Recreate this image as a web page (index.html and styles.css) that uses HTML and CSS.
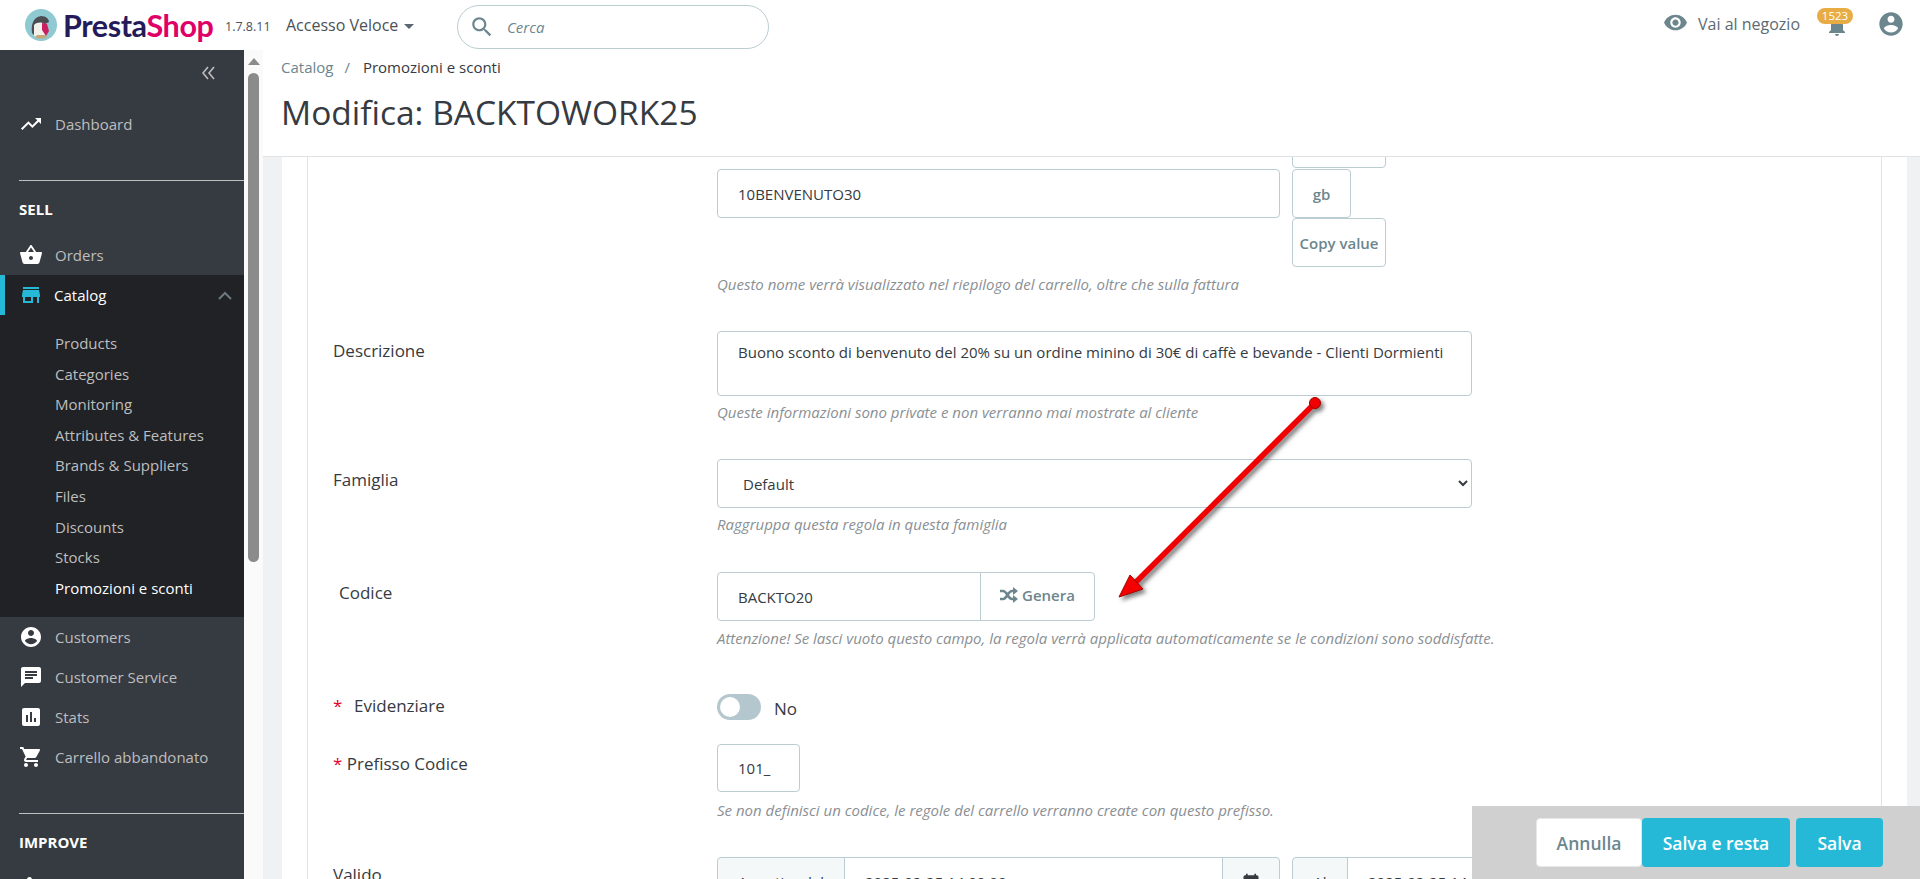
FILE: index.html
```html
<!DOCTYPE html>
<html lang="it">
<head>
    <meta charset="UTF-8">
    <meta name="viewport" content="width=device-width, initial-scale=1.0">
    <title>Modifica: BACKTOWORK25</title>
    <link rel="stylesheet" href="styles.css">
</head>
<body>
    <div class="app">
        <!-- Top bar -->
        <header class="topbar">
            <div class="logo">
                <svg class="logo-mark" viewBox="0 0 32 32" width="32" height="32">
                    <circle cx="16" cy="16" r="16" fill="#8fc9d2"/>
                    <path d="M7 24c-1-8 1-16 9-17 5 0 8 3 8 6l-4 2 1 9c-2 4-11 5-14 0z" fill="#4b4d52"/>
                    <path d="M9 16c3-3 8-3 10-1l1 11c-3 3-8 3-11 1z" fill="#f3f1ec"/>
                    <path d="M17 14l5 1 2 7-3 5-4-6z" fill="#c9215f"/>
                    <path d="M10 28c3 2 9 2 12 0l-2-2h-8z" fill="#c8a878"/>
                </svg>
                <span class="logo-name"><span class="logo-dark">Presta</span><span class="logo-pink">Shop</span></span>
            </div>
            <span class="version">1.7.8.11</span>
            <a class="quick-access">Accesso Veloce <i class="caret"></i></a>
            <div class="search">
                <svg class="search-icon" viewBox="0 0 24 24" width="26" height="26"><path d="M15.5 14h-.79l-.28-.27C15.41 12.59 16 11.11 16 9.5 16 5.91 13.09 3 9.5 3S3 5.91 3 9.5 5.91 16 9.5 16c1.61 0 3.09-.59 4.23-1.57l.27.28v.79l5 4.99L20.49 19l-4.99-5zm-6 0C7.01 14 5 11.99 5 9.5S7.01 5 9.5 5 14 7.01 14 9.5 11.99 14 9.5 14z"/></svg>
                <span class="search-text">Cerca</span>
            </div>
            <div class="topbar-right">
                <a class="shop-link">
                    <svg viewBox="0 0 24 24" width="25" height="25"><path d="M12 4.5C7 4.5 2.73 7.61 1 12c1.73 4.39 6 7.5 11 7.5s9.27-3.11 11-7.5c-1.73-4.39-6-7.5-11-7.5zM12 17c-2.76 0-5-2.24-5-5s2.24-5 5-5 5 2.24 5 5-2.24 5-5 5zm0-8c-1.66 0-3 1.34-3 3s1.34 3 3 3 3-1.34 3-3-1.34-3-3-3z"/></svg>
                    Vai al negozio
                </a>
                <div class="bell">
                    <svg viewBox="0 0 24 24" width="24" height="24"><path d="M12 22c1.1 0 2-.9 2-2h-4c0 1.1.89 2 2 2zm6-6v-5c0-3.07-1.64-5.64-4.5-6.32V4c0-.83-.67-1.5-1.5-1.5s-1.5.67-1.5 1.5v.68C7.63 5.36 6 7.92 6 11v5l-2 2v1h16v-1l-2-2z"/></svg>
                    <span class="badge">1523</span>
                </div>
                <svg class="user-icon" viewBox="0 0 24 24" width="28" height="28"><path d="M12 2C6.48 2 2 6.48 2 12s4.48 10 10 10 10-4.48 10-10S17.52 2 12 2zm0 3c1.66 0 3 1.34 3 3s-1.34 3-3 3-3-1.34-3-3 1.34-3 3-3zm0 14.2c-2.5 0-4.71-1.28-6-3.22.03-1.99 4-3.08 6-3.08 1.99 0 5.97 1.09 6 3.08-1.29 1.94-3.5 3.22-6 3.22z"/></svg>
            </div>
        </header>

        <div class="body">
            <!-- Sidebar -->
            <nav class="sidebar">
                <div class="collapse-row">
                    <svg viewBox="0 0 16 14" width="16" height="14"><path d="M7 1L2 7l5 6M13 1L8 7l5 6" fill="none" stroke="#bebebe" stroke-width="1.6"/></svg>
                </div>
                <a class="nav-item">
                    <svg viewBox="0 0 24 24" width="24" height="24"><path d="M16 6l2.29 2.29-4.88 4.88-4-4L2 16.59 3.41 18l6-6 4 4 6.3-6.29L22 12V6z"/></svg>
                    Dashboard
                </a>
                <div class="nav-section">SELL</div>
                <a class="nav-item">
                    <svg viewBox="0 0 24 24" width="24" height="24"><path d="M17.21 9l-4.38-6.56c-.19-.28-.51-.42-.83-.42-.32 0-.64.14-.83.43L6.79 9H2c-.55 0-1 .45-1 1 0 .09.01.18.04.27l2.54 9.27c.23.84 1 1.46 1.92 1.46h13c.92 0 1.69-.62 1.93-1.46l2.54-9.27L23 10c0-.55-.45-1-1-1h-4.79zM9 9l3-4.4L15 9H9zm3 8c-1.1 0-2-.9-2-2s.9-2 2-2 2 .9 2 2-.9 2-2 2z"/></svg>
                    Orders
                </a>
                <div class="nav-group">
                    <a class="nav-item active">
                        <svg viewBox="0 0 24 24" width="24" height="24"><path d="M20 4H4v2h16V4zm1 10v-2l-1-5H4l-1 5v2h1v6h10v-6h4v6h2v-6h1zm-9 4H6v-4h6v4z"/></svg>
                        Catalog
                        <svg class="chevron" viewBox="0 0 14 9" width="14" height="9"><path d="M1 8l6-6 6 6" fill="none" stroke="#6c7a80" stroke-width="2"/></svg>
                    </a>
                    <ul class="subnav">
                        <li>Products</li>
                        <li>Categories</li>
                        <li>Monitoring</li>
                        <li>Attributes &amp; Features</li>
                        <li>Brands &amp; Suppliers</li>
                        <li>Files</li>
                        <li>Discounts</li>
                        <li>Stocks</li>
                        <li class="current">Promozioni e sconti</li>
                    </ul>
                </div>
                <a class="nav-item">
                    <svg viewBox="0 0 24 24" width="24" height="24"><path d="M12 2C6.48 2 2 6.48 2 12s4.48 10 10 10 10-4.48 10-10S17.52 2 12 2zm0 3c1.66 0 3 1.34 3 3s-1.34 3-3 3-3-1.34-3-3 1.34-3 3-3zm0 14.2c-2.5 0-4.71-1.28-6-3.22.03-1.99 4-3.08 6-3.08 1.99 0 5.97 1.09 6 3.08-1.29 1.94-3.5 3.22-6 3.22z"/></svg>
                    Customers
                </a>
                <a class="nav-item">
                    <svg viewBox="0 0 24 24" width="24" height="24"><path d="M20 2H4c-1.1 0-1.99.9-1.99 2L2 22l4-4h14c1.1 0 2-.9 2-2V4c0-1.1-.9-2-2-2zM6 9h12v2H6V9zm8 5H6v-2h8v2zm4-6H6V6h12v2z"/></svg>
                    Customer Service
                </a>
                <a class="nav-item">
                    <svg viewBox="0 0 24 24" width="24" height="24"><path d="M19 3H5c-1.1 0-2 .9-2 2v14c0 1.1.9 2 2 2h14c1.1 0 2-.9 2-2V5c0-1.1-.9-2-2-2zM9 17H7v-7h2v7zm4 0h-2V7h2v10zm4 0h-2v-4h2v4z"/></svg>
                    Stats
                </a>
                <a class="nav-item">
                    <svg viewBox="0 0 24 24" width="24" height="24"><path d="M7 18c-1.1 0-1.99.9-1.99 2S5.9 22 7 22s2-.9 2-2-.9-2-2-2zM1 2v2h2l3.6 7.59-1.35 2.45c-.16.28-.25.61-.25.96 0 1.1.9 2 2 2h12v-2H7.42c-.14 0-.25-.11-.25-.25l.03-.12.9-1.63h7.45c.75 0 1.41-.41 1.75-1.03l3.58-6.49c.08-.14.12-.31.12-.48 0-.55-.45-1-1-1H5.21l-.94-2H1zm16 16c-1.1 0-1.99.9-1.99 2s.89 2 1.99 2 2-.9 2-2-.9-2-2-2z"/></svg>
                    Carrello abbandonato
                </a>
                <div class="nav-section second">IMPROVE</div>
                <a class="nav-item">
                    <svg viewBox="0 0 24 24" width="24" height="24"><path d="M20.5 11H19V7c0-1.1-.9-2-2-2h-4V3.5C13 2.12 11.88 1 10.5 1S8 2.12 8 3.5V5H4c-1.1 0-1.99.9-1.99 2v3.8H3.5c1.49 0 2.7 1.21 2.7 2.7s-1.21 2.7-2.7 2.7H2V20c0 1.1.9 2 2 2h3.8v-1.5c0-1.49 1.21-2.7 2.7-2.7 1.49 0 2.7 1.21 2.7 2.7V22H17c1.1 0 2-.9 2-2v-4h1.5c1.38 0 2.5-1.12 2.5-2.5S21.88 11 20.5 11z"/></svg>
                </a>
            </nav>

            <div class="scrollbar">
                <i class="scroll-arrow"></i>
                <div class="scroll-thumb"></div>
            </div>

            <!-- Main content -->
            <main class="main">
                <div class="page-head">
                    <div class="breadcrumb"><span class="crumb">Catalog</span><span class="crumb-sep">/</span><span>Promozioni e sconti</span></div>
                    <h1>Modifica: BACKTOWORK25</h1>
                </div>
                <div class="page-scroll">
                    <div class="card">
                        <div class="card-inner">
                            <form class="rule-form">
                                <div class="form-row name-row">
                                    <label></label>
                                    <div>
                                        <div class="name-field">
                                            <input class="field name-input" type="text" value="10BENVENUTO30">
                                            <div class="lang-buttons">
                                                <button type="button" class="small-btn copy-btn">&nbsp;</button>
                                                <button type="button" class="small-btn lang-btn">gb</button>
                                                <button type="button" class="small-btn copy-btn">Copy value</button>
                                            </div>
                                        </div>
                                        <p class="hint">Questo nome verrà visualizzato nel riepilogo del carrello, oltre che sulla fattura</p>
                                    </div>
                                </div>

                                <div class="form-row">
                                    <label>Descrizione</label>
                                    <div>
                                        <textarea class="field desc-input" rows="2">Buono sconto di benvenuto del 20% su un ordine minino di 30€ di caffè e bevande - Clienti Dormienti</textarea>
                                        <p class="hint">Queste informazioni sono private e non verranno mai mostrate al cliente</p>
                                    </div>
                                </div>

                                <div class="form-row family-row">
                                    <label class="label-low">Famiglia</label>
                                    <div>
                                        <select class="field family-select"><option>Default</option></select>
                                        <p class="hint">Raggruppa questa regola in questa famiglia</p>
                                    </div>
                                </div>

                                <div class="form-row code-row">
                                    <label class="label-low code-label">Codice</label>
                                    <div>
                                        <div class="input-group code-group">
                                            <input class="field code-input" type="text" value="BACKTO20">
                                            <button type="button" class="generate-btn">
                                                <svg viewBox="0 0 18 16" width="18" height="16"><path d="M0 4h3c4 0 5 8 9 8h2M0 12h3c4 0 5-8 9-8h2" fill="none" stroke="#6c868e" stroke-width="2.6"/><path d="M13 0l5 4-5 4zM13 8l5 4-5 4z" fill="#6c868e"/></svg>
                                                Genera
                                            </button>
                                        </div>
                                        <p class="hint hint-code">Attenzione! Se lasci vuoto questo campo, la regola verrà applicata automaticamente se le condizioni sono soddisfatte.</p>
                                    </div>
                                </div>

                                <div class="form-row toggle-row">
                                    <label class="label-flat"><span class="required star-wide">*</span>Evidenziare</label>
                                    <div class="toggle-wrap">
                                        <span class="toggle"><i class="toggle-knob"></i></span>
                                        <span>No</span>
                                    </div>
                                </div>

                                <div class="form-row prefix-row">
                                    <label><span class="required">*</span> Prefisso Codice</label>
                                    <div>
                                        <input class="field prefix-input" type="text" value="101_">
                                        <p class="hint">Se non definisci un codice, le regole del carrello verranno create con questo prefisso.</p>
                                    </div>
                                </div>

                                <div class="form-row">
                                    <label class="label-valid">Valido</label>
                                    <div class="date-row">
                                        <div class="input-group date-group">
                                            <span class="addon from-addon">A partire dal</span>
                                            <input class="field date-input" type="text" value="2025-02-25 14:00:00">
                                            <span class="addon cal-addon">
                                                <svg viewBox="0 0 24 24" width="20" height="20"><path d="M19 4h-1V2h-2v2H8V2H6v2H5c-1.1 0-2 .9-2 2v14c0 1.1.9 2 2 2h14c1.1 0 2-.9 2-2V6c0-1.1-.9-2-2-2zm0 16H5V9h14v11z"/></svg>
                                            </span>
                                        </div>
                                        <div class="input-group date-group">
                                            <span class="addon to-addon">Al</span>
                                            <input class="field date-input" type="text" value="2025-02-25 14:00:00">
                                        </div>
                                    </div>
                                </div>
                            </form>
                        </div>
                    </div>
                </div>
            </main>
        </div>

        <!-- Annotation arrow drawn over the form -->
        <svg class="annotation" viewBox="0 0 220 215" width="220" height="215">
            <path d="M205 8L20 193" stroke="#f00000" stroke-width="5.5"/>
            <circle cx="205" cy="8" r="5.5" fill="#f00000" stroke="#a30000"/>
            <path d="M9 202L20 180 33 194z" fill="#f50000" stroke="#a30000"/>
        </svg>

        <div class="action-bar">
            <button type="button" class="btn btn-cancel">Annulla</button>
            <button type="button" class="btn btn-save btn-stay">Salva e resta</button>
            <button type="button" class="btn btn-save">Salva</button>
        </div>
    </div>
</body>
</html>
```

FILE: styles.css
```css
* {
    box-sizing: border-box;
}
html, body {
    height: 100%;
    margin: 0;
    overflow: hidden;
}
body {
    font-family: 'Open Sans', 'Noto Sans', sans-serif;
    font-size: 15px;
    color: #363a41;
    background: white;
}
.app {
    height: 100%;
    display: flex;
    flex-direction: column;
    position: relative;
    overflow: hidden;
}

/* top bar */
.topbar {
    flex: 0 0 50px;
    display: flex;
    align-items: center;
    padding-left: 25px;
    background: white;
}
.logo {
    display: flex;
    align-items: center;
    width: 190px;
}
.logo-mark {
    flex: none;
}
.logo-name {
    font-family: 'Lato', sans-serif;
    font-weight: 700;
    font-size: 30.5px;
    letter-spacing: -0.4px;
    margin-left: 6px;
    margin-top: -1px;
}
.logo-dark {
    color: #251b5b;
}
.logo-pink {
    color: #df0067;
}
.version {
    width: 70px;
    padding-left: 10px;
    font-size: 12.5px;
    margin-top: 3px;
    color: #4a5157;
}
.quick-access {
    width: 172px;
    font-size: 16px;
    color: #4a5157;
    padding-left: 1px;
}
.caret {
    display: inline-block;
    border-left: 5px solid transparent;
    border-right: 5px solid transparent;
    border-top: 5px solid #5b6670;
    margin-left: 2px;
    vertical-align: 2px;
}
.search {
    width: 312px;
    height: 44px;
    margin-top: 4px;
    border: 1px solid #bbcdd2;
    border-radius: 22px;
    display: flex;
    align-items: center;
    padding-left: 11px;
}
.search-icon {
    fill: #6c868e;
}
.search-text {
    font-style: italic;
    color: #6c868e;
    margin-left: 12px;
    font-size: 15px;
}
.topbar-right {
    margin-left: auto;
    display: flex;
    align-items: center;
    padding-right: 15px;
}
.shop-link {
    display: flex;
    align-items: center;
    gap: 10px;
    font-size: 16px;
    color: #5c6b73;
    margin-top: -2px;
}
.shop-link svg {
    fill: #6c868e;
    margin-top: -3px;
}
.bell {
    position: relative;
    width: 24px;
    height: 24px;
    margin-left: 25px;
    margin-top: 2px;
    fill: #6c868e;
}
.bell svg {
    display: block;
}
.badge {
    position: absolute;
    left: -8px;
    top: -6px;
    width: 36px;
    height: 16px;
    border-radius: 8px;
    background: #e8ac45;
    color: white;
    font-size: 11.5px;
    line-height: 16px;
    text-align: center;
}
.user-icon {
    fill: #6c868e;
    margin-left: 28px;
    margin-top: -3px;
}

/* body columns */
.body {
    flex: 1;
    display: flex;
    min-height: 0;
}
.sidebar {
    flex: 0 0 244px;
    background: #363a41;
    overflow: hidden;
}
.collapse-row {
    height: 54px;
    display: flex;
    align-items: center;
    justify-content: flex-end;
    padding: 0 27px 8px 0;
}
.nav-item {
    height: 40px;
    display: flex;
    align-items: center;
    padding-left: 19px;
    gap: 12px;
    color: #bebebe;
}
.nav-item svg {
    fill: white;
    flex: none;
}
.nav-item.active {
    color: white;
    box-shadow: inset 5px 0 0 #25b9d7;
    gap: 11px;
}
.nav-item.active svg {
    fill: #25b9d7;
}
.nav-item.active .chevron {
    fill: none;
    margin-left: auto;
    margin-right: 12px;
}
.nav-section {
    margin: 36px 0 7px 19px;
    padding-top: 17px;
    height: 48px;
    border-top: 1px solid #bebebe;
    color: white;
    font-weight: 700;
    line-height: 22px;
}
.nav-section.second {
    margin-bottom: 0;
    padding-top: 17px;
    height: 55px;
}
.nav-group {
    background: #202226;
}
.subnav {
    list-style: none;
    margin: 0;
    padding: 13px 0 14px 55px;
    color: #bebebe;
}
.subnav li {
    height: 30.6px;
    line-height: 30px;
}
.subnav .current {
    color: white;
}

/* fake scrollbar, the screenshot keeps the browser one */
.scrollbar {
    flex: 0 0 19px;
    background: #fafafa;
    padding-top: 8px;
}
.scroll-arrow {
    display: block;
    width: 0;
    margin: 0 auto;
    border-left: 6px solid transparent;
    border-right: 6px solid transparent;
    border-bottom: 7px solid #8b8b8b;
}
.scroll-thumb {
    width: 11px;
    height: 489px;
    margin: 8px 0 0 4px;
    background: #8b8b8b;
    border-radius: 6px;
}
.main {
    flex: 1;
    min-width: 0;
    display: flex;
    flex-direction: column;
}
.page-head {
    flex: 0 0 107px;
    padding: 7px 0 0 18px;
    border-bottom: 1px solid #dfe3e5;
}
.breadcrumb {
    line-height: 20px;
}
.crumb {
    color: #6c868e;
}
.crumb-sep {
    color: #6c868e;
    margin: 0 13px 0 11px;
}
h1 {
    margin: 10px 0 0;
    font-size: 33.5px;
    font-weight: 400;
    line-height: 50px;
    color: #363a41;
}
.page-scroll {
    flex: 1;
    min-height: 0;
    overflow: hidden;
    background: #eff1f2;
    padding: 0 13px 0 19px;
}
.card {
    background: white;
    height: 100%;
    padding: 0 25px;
}
.card-inner {
    height: 100%;
    overflow: hidden;
    border-left: 1px solid #dfe3e5;
    border-right: 1px solid #dfe3e5;
}
.rule-form {
    margin-top: -38px;
    padding-left: 25px;
}

/* form rows */
.form-row {
    display: grid;
    grid-template-columns: 384px 1fr;
    margin-bottom: 37px;
}
.form-row label {
    font-size: 17px;
    line-height: 24px;
    padding-top: 8px;
}
.form-row .label-low {
    padding-top: 9px;
}
.form-row .code-label {
    padding-left: 6px;
}
.form-row .label-flat {
    padding-top: 0;
}
.form-row .label-valid {
    padding-top: 6px;
}
.required {
    color: #e5002b;
}
.star-wide {
    display: inline-block;
    width: 21px;
}
.field {
    display: block;
    font-family: inherit;
    font-size: 15px;
    color: #363a41;
    background: white;
    border: 1px solid #bbcdd2;
    border-radius: 4px;
    height: 49px;
    padding: 0 20px;
}
.name-field {
    display: flex;
    gap: 12px;
}
.name-input {
    width: 563px;
    margin-top: 50px;
}
.lang-buttons {
    display: flex;
    flex-direction: column;
    align-items: flex-start;
}
.small-btn {
    height: 49px;
    background: white;
    border: 1px solid #bbcdd2;
    border-radius: 4px;
    font-family: inherit;
    font-size: 15px;
    font-weight: 600;
    color: #6c868e;
    padding: 0;
}
.lang-btn {
    width: 59px;
    margin-top: 1px;
}
.copy-btn {
    width: 94px;
}
.hint {
    margin: 6px 0 0;
    line-height: 20px;
    font-size: 15px;
    font-style: italic;
    color: #8a8f94;
}
.name-row .hint {
    margin-top: 7px;
}
.hint-code {
    margin-top: 7px;
}
.desc-input {
    width: 755px;
    height: 65px;
    padding: 10px 20px;
    line-height: 20px;
    resize: none;
    overflow: hidden;
}
.family-select {
    width: 755px;
    padding: 0 21px;
}
.family-row {
    margin-bottom: 38px;
}
.code-row {
    margin-bottom: 46px;
}
.input-group {
    display: flex;
}
.code-input {
    width: 264px;
    border-radius: 4px 0 0 4px;
}
.generate-btn {
    width: 115px;
    height: 49px;
    margin-left: -1px;
    background: white;
    border: 1px solid #bbcdd2;
    border-radius: 0 4px 4px 0;
    font-family: inherit;
    font-size: 15px;
    font-weight: 600;
    color: #6c868e;
    display: flex;
    align-items: center;
    justify-content: center;
    gap: 4px;
    padding: 0 0 4px;
}
.toggle-row {
    margin-bottom: 24px;
    height: 26px;
}
.toggle-wrap {
    display: flex;
    align-items: center;
    gap: 13px;
    font-size: 17px;
    padding-top: 2px;
}
.toggle {
    width: 44px;
    height: 26px;
    border-radius: 13px;
    background: #b5c7ce;
    padding: 3px;
    margin-top: -2px;
}
.toggle-knob {
    display: block;
    width: 20px;
    height: 20px;
    border-radius: 50%;
    background: white;
}
.prefix-input {
    width: 83px;
    height: 48px;
}
.prefix-row .hint {
    margin-top: 8px;
}
.date-row {
    display: flex;
    gap: 12px;
}
.date-group {
    flex: none;
    width: 563px;
}
.addon {
    height: 49px;
    border: 1px solid #bbcdd2;
    background: #f5f8f9;
    display: flex;
    align-items: center;
    justify-content: center;
}
.from-addon {
    flex: 0 0 128px;
    border-radius: 4px 0 0 4px;
}
.to-addon {
    flex: 0 0 56px;
    border-radius: 4px 0 0 4px;
}
.cal-addon {
    flex: 0 0 58px;
    margin-left: -1px;
    border-radius: 0 4px 4px 0;
    fill: #363a41;
}
.date-input {
    flex: 1;
    min-width: 0;
    margin-left: -1px;
    border-radius: 0;
}

/* annotation and bottom bar sit over the form */
.annotation {
    position: absolute;
    left: 1110px;
    top: 395px;
    overflow: visible;
    filter: drop-shadow(3px 3px 2px rgba(0,0,0,0.5));
}
.action-bar {
    position: absolute;
    right: 0;
    bottom: 0;
    width: 448px;
    height: 73px;
    background: #d0d0d0;
    display: flex;
    align-items: flex-start;
    padding: 12px 37px 0 0;
    justify-content: flex-end;
}
.btn {
    height: 49px;
    border: 1px solid transparent;
    border-radius: 4px;
    font-family: inherit;
    font-size: 17.5px;
    font-weight: 600;
    padding: 0;
}
.btn-cancel {
    width: 106px;
    background: white;
    color: #6c868e;
    border-color: #e4e8ea;
}
.btn-save {
    width: 87px;
    background: #25b9d7;
    color: white;
}
.btn-stay {
    width: 148px;
    margin-right: 6px;
}
```
